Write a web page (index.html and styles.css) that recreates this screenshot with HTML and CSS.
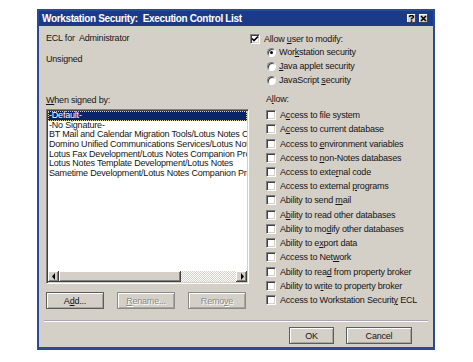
FILE: index.html
```html
<!DOCTYPE html>
<html lang="en">
<head>
    <meta charset="UTF-8">
    <title>Workstation Security: Execution Control List</title>
    <link rel="stylesheet" href="styles.css">
</head>
<body>
    <div class="dialog">
        <div class="titlebar">
            <span class="title">Workstation Security:&nbsp; Execution Control List</span>
            <span class="tb-buttons">
                <span class="tb-btn">
                    <svg width="7" height="7" viewBox="0 0 7 7"><path d="M1.5 2 Q1.5 0.5 3.5 0.5 Q5.5 0.5 5.5 2 Q5.5 3 3.5 3.5 V4.5" fill="none" stroke="#000" stroke-width="1.4"/><rect x="2.8" y="5.4" width="1.5" height="1.4" fill="#000"/></svg>
                </span>
                <span class="tb-btn">
                    <svg width="7" height="7" viewBox="0 0 7 7"><path d="M1 1 L6 6 M6 1 L1 6" stroke="#000" stroke-width="1.6"/></svg>
                </span>
            </span>
        </div>

        <div class="content">
            <div class="left">
                <div class="line">ECL for&nbsp; Administrator</div>
                <div class="line unsigned">Unsigned</div>
                <div class="line signed-label"><u>W</u>hen signed by:</div>
                <div class="listbox">
                    <div class="items">
                        <div class="item selected">-Default-</div>
                        <div class="item">-No Signature-</div>
                        <div class="item">BT Mail and Calendar Migration Tools/Lotus Notes Companion Products</div>
                        <div class="item">Domino Unified Communications Services/Lotus Notes Companion Products</div>
                        <div class="item">Lotus Fax Development/Lotus Notes Companion Products</div>
                        <div class="item">Lotus Notes Template Development/Lotus Notes</div>
                        <div class="item">Sametime Development/Lotus Notes Companion Products</div>
                    </div>
                    <div class="hscroll">
                        <span class="sb-btn">
                            <svg width="4" height="7" viewBox="0 0 4 7"><path d="M3 0 V7 L0 3.5 Z" fill="#000"/></svg>
                        </span>
                        <span class="sb-thumb"></span>
                        <span class="sb-track"></span>
                        <span class="sb-btn">
                            <svg width="4" height="7" viewBox="0 0 4 7"><path d="M1 0 V7 L4 3.5 Z" fill="#000"/></svg>
                        </span>
                    </div>
                </div>
                <div class="list-buttons">
                    <button class="btn strong">A<u>d</u>d...</button>
                    <button class="btn" disabled><u>R</u>ename...</button>
                    <button class="btn" disabled>Remo<u>v</u>e</button>
                </div>
            </div>

            <div class="right">
                <div class="row allow-row"><span class="check"><svg width="8" height="8" viewBox="0 0 8 8"><path d="M1 3.5 L3 5.5 L7 1.5" fill="none" stroke="#000" stroke-width="1.6"/></svg></span><span>Allow <u>u</u>ser to modify:</span></div>
                <div class="radios">
                    <div class="row"><span class="radio on"></span><span>Wor<u>k</u>station security</span></div>
                    <div class="row"><span class="radio"></span><span><u>J</u>ava applet security</span></div>
                    <div class="row"><span class="radio"></span><span>JavaScript <u>s</u>ecurity</span></div>
                </div>
                <div class="row allow-label"><span>A<u>l</u>low:</span></div>
                <div class="perms">
                    <div class="row perm"><span class="check"></span><span>A<u>c</u>cess to file system</span></div>
                    <div class="row perm"><span class="check"></span><span>A<u>c</u>cess to current database</span></div>
                    <div class="row perm"><span class="check"></span><span>Access to <u>e</u>nvironment variables</span></div>
                    <div class="row perm"><span class="check"></span><span>Access to <u>n</u>on-Notes databases</span></div>
                    <div class="row perm"><span class="check"></span><span>Access to exte<u>r</u>nal code</span></div>
                    <div class="row perm"><span class="check"></span><span>Access to external <u>p</u>rograms</span></div>
                    <div class="row perm"><span class="check"></span><span>Ability to send <u>m</u>ail</span></div>
                    <div class="row perm"><span class="check"></span><span>A<u>b</u>ility to read other databases</span></div>
                    <div class="row perm"><span class="check"></span><span>Ability to mo<u>d</u>ify other databases</span></div>
                    <div class="row perm"><span class="check"></span><span>Ability to e<u>x</u>port data</span></div>
                    <div class="row perm"><span class="check"></span><span>Access to Net<u>w</u>ork</span></div>
                    <div class="row perm"><span class="check"></span><span>Ability to rea<u>d</u> from property broker</span></div>
                    <div class="row perm"><span class="check"></span><span>Ability to w<u>r</u>ite to property broker</span></div>
                    <div class="row perm"><span class="check"></span><span>Access to Workstation Securit<u>y</u> ECL</span></div>
                </div>
            </div>
        </div>

        <div class="sep"></div>
        <div class="actions">
            <button class="btn strong ok">OK</button>
            <button class="btn strong cancel">Cancel</button>
        </div>
    </div>
</body>
</html>
```

FILE: styles.css
```css
body { margin: 0; background: #fff; color: #151515; font-family: "Liberation Sans", Arial, sans-serif; font-size: 9px; letter-spacing: -0.2px; }
u { text-decoration-thickness: 1px; text-underline-offset: 1px; }

.dialog {
    margin: 9px 0 0 37px; width: 398px; height: 341px; box-sizing: border-box;
    border: 2px solid #2b4a94; border-bottom-width: 3px; background: #d4d0c8;
    display: flex; flex-direction: column;
}
.titlebar {
    height: 15px; background: #1b3a88; color: #fff; font-weight: bold; font-size: 10px; letter-spacing: -0.35px;
    display: flex; align-items: center; justify-content: space-between; padding: 0 5px 0 3px;
}
.tb-buttons { display: flex; gap: 3px; }
.tb-btn {
    width: 9px; height: 9px; background: #d4d0c8; display: flex; align-items: center; justify-content: center;
    box-shadow: inset -1px -1px #404040, inset 1px 1px #fff;
}

.content { display: flex; padding: 6px 0 0 7px; }
.left { width: 203px; }
.line { height: 12px; line-height: 12px; }
.unsigned { margin-top: 9px; }
.signed-label { margin-top: 29px; }

.listbox {
    margin-top: 3px; height: 175px; box-sizing: border-box; background: #fff;
    border: 1px solid; border-color: #808080 #fff #fff #808080;
    box-shadow: inset 1px 1px #404040, inset -1px -1px #d4d0c8;
    padding: 1px; display: flex; flex-direction: column;
}
.items { flex: 1; overflow: hidden; }
.item { height: 9.7px; line-height: 9.7px; white-space: nowrap; padding-left: 1px; }
.item.selected { background: #0a246a; color: #fff; outline: 1px dotted #d8d0a0; outline-offset: -1px; }

.hscroll { display: flex; height: 11px; }
.sb-btn, .sb-thumb {
    background: #d4d0c8; box-shadow: inset -1px -1px #404040, inset 1px 1px #fff, inset -2px -2px #808080;
}
.sb-btn { width: 11px; display: flex; align-items: center; justify-content: center; }
.sb-thumb { width: 122px; }
.sb-track { flex: 1; background: repeating-conic-gradient(#d4d0c8 0 25%, #fff 0 50%) 0 0 / 2px 2px; }

.list-buttons { display: flex; gap: 13px; margin-top: 8px; }

.btn {
    height: 17px; width: 58px; padding: 0; background: #d4d0c8; color: #151515;
    font: inherit; letter-spacing: inherit; border: 1px solid #8c8a86;
    box-shadow: inset 1px 1px #fff, inset -1px -1px #aaa69e;
}
.btn.strong { border-color: #5c5c5c; }
.btn:disabled { color: #8e8a84; text-shadow: 1px 1px #fff; }

.right { margin-left: 1px; }
.row { height: 14px; display: flex; align-items: center; white-space: nowrap; }
.allow-row { height: 13px; }
.radios .row { padding-left: 17px; }
.allow-label { margin-top: 5px; padding-left: 16px; }
.perms { margin-top: 2px; }
.perm { height: 14.23px; padding-left: 16px; }

.check {
    width: 10px; height: 10px; box-sizing: border-box; background: #fff; margin-right: 4px; flex: none;
    border: 1px solid; border-color: #808080 #fff #fff #808080;
    box-shadow: inset 1px 1px #404040, inset -1px -1px #d4d0c8;
    display: flex; align-items: center; justify-content: center;
}
.radio {
    width: 9px; height: 9px; box-sizing: border-box; border-radius: 50%; background: #fff; margin-right: 3px; flex: none;
    border: 1px solid; border-color: #808080 #fff #fff #808080;
    box-shadow: inset 1px 1px #404040;
    position: relative;
}
.radio.on::after {
    content: ""; position: absolute; left: 2px; top: 2px; width: 3px; height: 3px; border-radius: 50%; background: #000;
}

.sep { margin: 11px 5px 0 5px; border-top: 1px solid #b0a4b4; border-bottom: 1px solid #fff; }
.actions { display: flex; justify-content: flex-end; gap: 12px; margin-top: 5px; padding-right: 21px; }
.ok { width: 45px; }
.cancel { width: 66px; }
```
